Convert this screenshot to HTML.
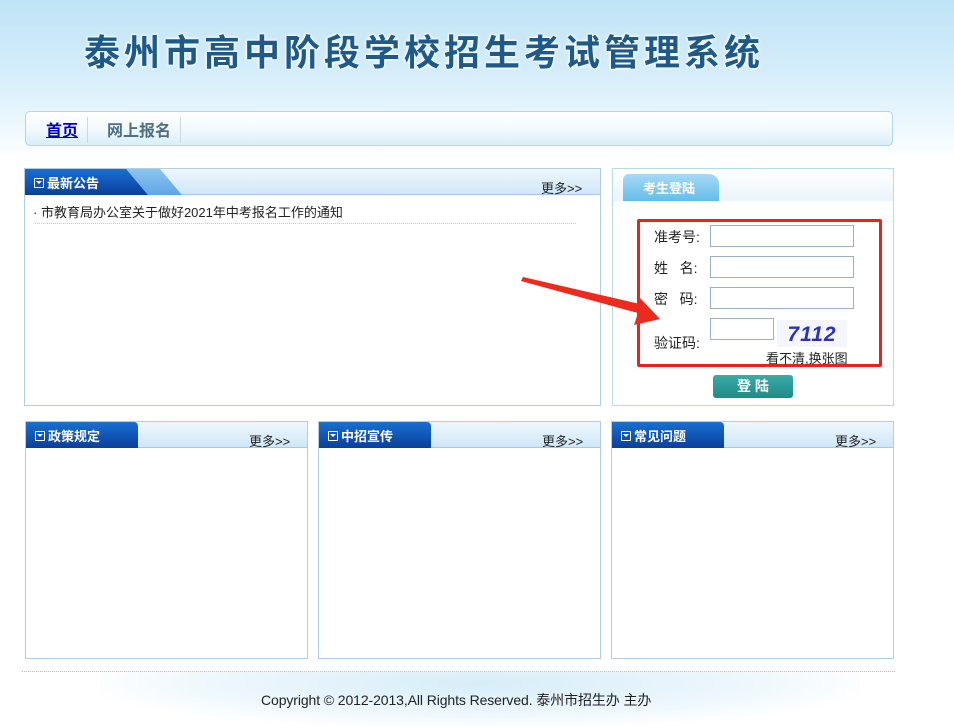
<!DOCTYPE html>
<html><head><meta charset="utf-8"><style>
*{margin:0;padding:0;box-sizing:border-box}
body{width:954px;height:727px;position:relative;background:#fff;font-family:"Liberation Sans","Noto Sans CJK SC",sans-serif;font-size:13px;color:#222;overflow:hidden}
.abs{position:absolute}
.hdr{left:0;top:0;width:954px;height:160px;background:linear-gradient(180deg,#bfe3f6 0%,#d5edf9 45%,#eef8fd 80%,#fff 100%)}
.title{left:84px;top:24px;font-size:36px;font-weight:bold;color:#1d5a8a;letter-spacing:4px;white-space:nowrap;text-shadow:0 0 3px #fff,0 0 3px #fff,0 0 2px #fff}
.nav{left:25px;top:111px;width:868px;height:35px;border:1px solid #a9d9ee;border-radius:5px;background:linear-gradient(180deg,#fff 0%,#f2f9fd 50%,#d8eef9 100%)}
.panel{border:1px solid #b3cde3;background:#fff}
.ph{position:absolute;left:0;top:0;right:0;height:26px;background:linear-gradient(180deg,#eef7fd,#cfe7f8);border-bottom:1px solid #a9c6e6}
.tab{position:absolute;left:0;top:0;height:26px;background:linear-gradient(180deg,#1a6fd0,#0a3f9c);color:#fff;font-weight:bold;font-size:13px;line-height:30px;padding-left:22px}
.tab:before{content:"";position:absolute;left:9px;top:9px;width:8px;height:8px;border:1px solid #fff;border-radius:1px}
.tab:after{content:"";position:absolute;left:11px;top:12px;border-left:3px solid transparent;border-right:3px solid transparent;border-top:3px solid #fff}
.more{position:absolute;top:9px;font-size:13px;color:#222}
.inp{position:absolute;left:710px;width:144px;height:22px;border:1px solid #9ab0c4;background:#fff}
.lbl{position:absolute;left:654px;font-size:14px;color:#222}
</style></head><body>
<div class="abs hdr"></div>
<div class="abs title">泰州市高中阶段学校招生考试管理系统</div>
<div class="abs nav"></div>
<div class="abs" style="left:46px;top:117px;font-size:16px;font-weight:bold;color:#00c;text-decoration:underline">首页</div>
<div class="abs" style="left:87px;top:117px;width:1px;height:26px;background:#c9dce6"></div>
<div class="abs" style="left:107px;top:117px;font-size:16px;font-weight:bold;color:#4e6f84">网上报名</div>
<div class="abs" style="left:180px;top:117px;width:1px;height:26px;background:#c9dce6"></div>

<div class="abs panel" style="left:24px;top:168px;width:577px;height:238px">
<div class="ph"><div class="tab" style="width:124px">最新公告</div>
<div style="position:absolute;left:112px;top:0;width:34px;height:26px;background:linear-gradient(180deg,#8dc4f0,#5ea6e6);transform:skewX(40deg);z-index:0"></div>
<div class="more" style="left:516px">更多&gt;&gt;</div></div>
<div class="abs" style="left:8px;top:33px;font-size:13px">· 市教育局办公室关于做好2021年中考报名工作的通知</div>
<div class="abs" style="left:10px;top:54px;width:541px;border-top:1px dotted #c8c8c8"></div>
</div>

<div class="abs panel" style="left:612px;top:168px;width:282px;height:238px;border-color:#b8dbea">
<div style="position:absolute;left:0;top:0;right:0;height:32px;background:linear-gradient(180deg,#fff,#eaf4fa)"></div>
<div style="position:absolute;left:10px;top:5px;width:96px;height:27px;background:linear-gradient(180deg,#a6daf5,#63bde9);border-radius:6px 10px 0 0;color:#fff;font-weight:bold;font-size:13px;line-height:30px;padding-left:20px">考生登陆</div>
</div>
<div class="abs" style="left:637px;top:219px;width:245px;height:148px;border:3px solid #e8231e;border-radius:2px"></div>
<div class="lbl" style="top:227px">准考号:</div>
<div class="lbl" style="top:258px">姓&nbsp;&nbsp;&nbsp;名:</div>
<div class="lbl" style="top:289px">密&nbsp;&nbsp;&nbsp;码:</div>
<div class="lbl" style="top:333px">验证码:</div>
<div class="inp" style="top:225px"></div>
<div class="inp" style="top:256px"></div>
<div class="inp" style="top:287px"></div>
<div class="inp" style="top:318px;width:64px"></div>
<div class="abs" style="left:777px;top:320px;width:70px;height:27px;background:#f4f6fb;color:#2a33b8;font-weight:bold;font-size:21px;font-style:italic;letter-spacing:1px;text-align:center;line-height:30px">7112</div>
<div class="abs" style="left:766px;top:348px;font-size:13px">看不清,换张图</div>
<div class="abs" style="left:713px;top:375px;width:80px;height:23px;background:linear-gradient(180deg,#3aaba7,#1f8b87);border-radius:3px;color:#fff;font-weight:bold;font-size:14px;text-align:center;line-height:23px">登 陆</div>

<svg class="abs" style="left:0;top:0" width="954" height="727"><polygon points="521,281 523,277 640,304 638,296 660,319 634,325 638,313" fill="#ec2a1e"/></svg>

<div class="abs panel" style="left:25px;top:421px;width:283px;height:238px">
<div class="ph"><div class="tab" style="width:112px;border-radius:0 4px 0 0">政策规定</div><div class="more" style="left:223px">更多&gt;&gt;</div></div></div>
<div class="abs panel" style="left:318px;top:421px;width:283px;height:238px">
<div class="ph"><div class="tab" style="width:112px;border-radius:0 4px 0 0">中招宣传</div><div class="more" style="left:223px">更多&gt;&gt;</div></div></div>
<div class="abs panel" style="left:611px;top:421px;width:283px;height:238px">
<div class="ph"><div class="tab" style="width:112px;border-radius:0 4px 0 0">常见问题</div><div class="more" style="left:223px">更多&gt;&gt;</div></div></div>

<div class="abs" style="left:22px;top:671px;width:873px;border-top:1px dotted #bbb"></div>
<div class="abs" style="left:100px;top:672px;width:760px;height:55px;background:radial-gradient(ellipse at 50% 20%,#d6edf9 0%,#eef7fc 50%,#fff 75%)"></div>
<div class="abs" style="left:261px;top:690px;font-size:14px;white-space:nowrap;letter-spacing:-0.1px">Copyright © 2012-2013,All Rights Reserved. 泰州市招生办 主办</div>
</body></html>
